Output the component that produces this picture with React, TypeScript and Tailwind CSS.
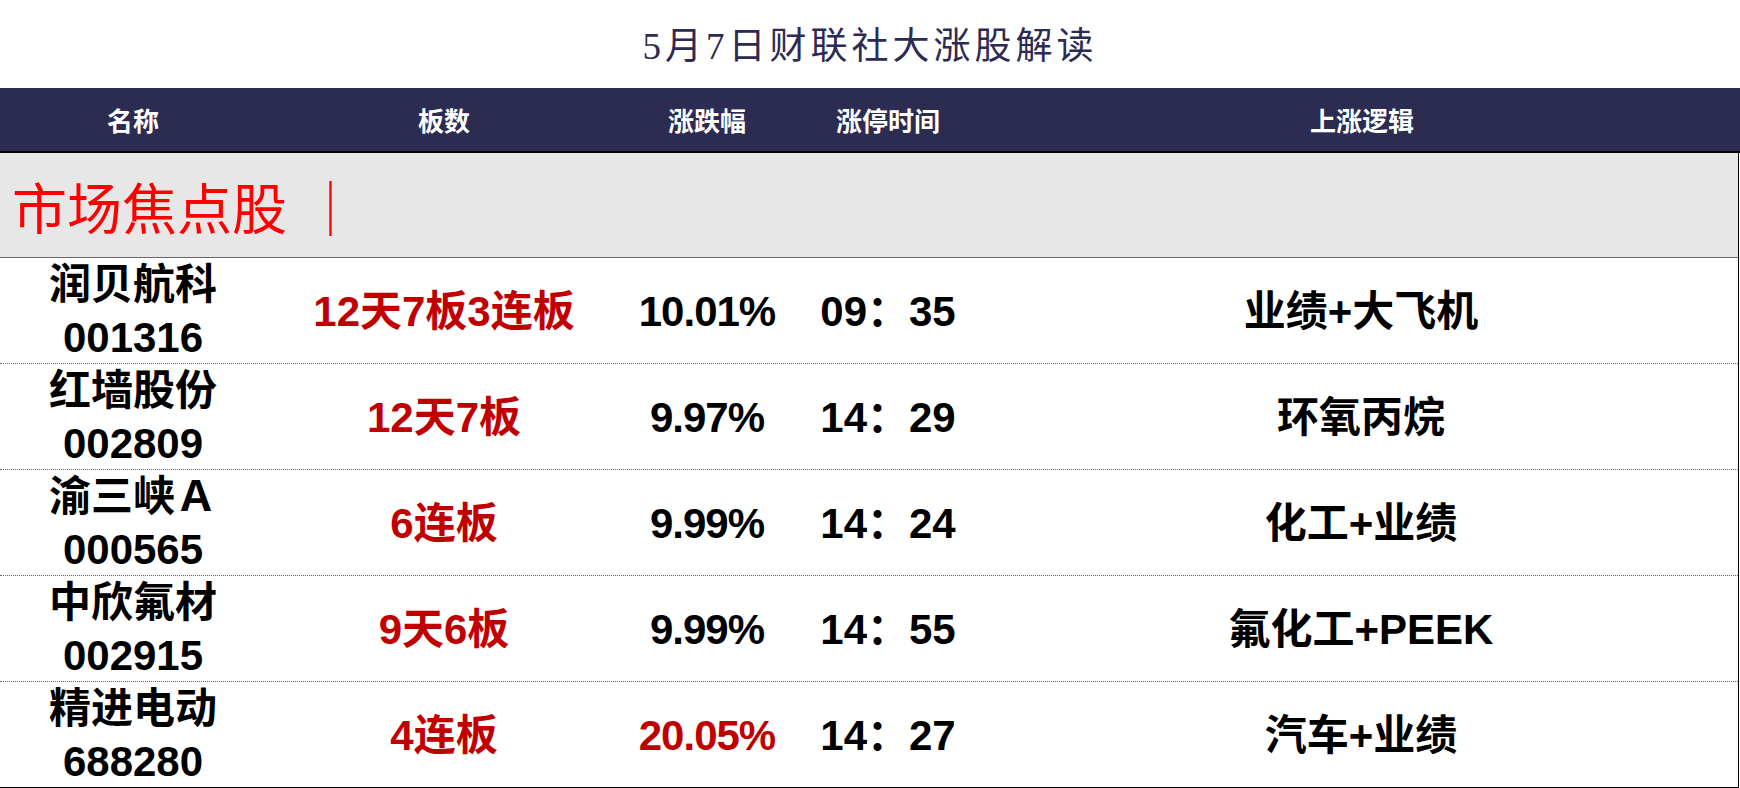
import React from 'react';

type Row = {
    name: string;
    code: string;
    board: string;
    pct: string;
    pctRed?: boolean;
    time: string;
    logic: string;
};

const rows: Row[] = [
    { name: '润贝航科', code: '001316', board: '12天7板3连板', pct: '10.01%', time: '09：35', logic: '业绩+大飞机' },
    { name: '红墙股份', code: '002809', board: '12天7板', pct: '9.97%', time: '14：29', logic: '环氧丙烷' },
    { name: '渝三峡Ａ', code: '000565', board: '6连板', pct: '9.99%', time: '14：24', logic: '化工+业绩' },
    { name: '中欣氟材', code: '002915', board: '9天6板', pct: '9.99%', time: '14：55', logic: '氟化工+PEEK' },
    { name: '精进电动', code: '688280', board: '4连板', pct: '20.05%', pctRed: true, time: '14：27', logic: '汽车+业绩' },
];

const cols = 'grid grid-cols-[266px_356px_170px_192px_1fr]';

const App = () => {
    return (
        <div className="w-[1740px] h-[788px] bg-white overflow-hidden font-['Liberation_Sans','Noto_Sans_CJK_SC',sans-serif]">
            {/* Title */}
            <div className="h-[88px] flex justify-center items-center pt-[6px]">
                <h1 className="text-[37px] tracking-[4px] font-normal text-[#2d2b52] font-['Liberation_Serif','Noto_Sans_CJK_SC',serif]">
                    5月7日财联社大涨股解读
                </h1>
            </div>

            {/* Header bar */}
            <div className={`${cols} h-[65px] bg-[#2c2b52] border-b-2 border-black text-white font-bold text-[26px] font-['Noto_Sans_CJK_SC',sans-serif]`}>
                <div className="flex items-center justify-center">名称</div>
                <div className="flex items-center justify-center">板数</div>
                <div className="flex items-center justify-center">涨跌幅</div>
                <div className="flex items-center justify-center">涨停时间</div>
                <div className="flex items-center justify-center">上涨逻辑</div>
            </div>

            {/* Section label */}
            <div className="h-[105px] w-[1739px] bg-[#e7e7e7] border-r border-b border-r-black border-b-[#666] border-b-dotted flex items-center pl-[12px]">
                <span className="text-[55px] text-[#ff0000] leading-none font-['Noto_Sans_CJK_SC',serif]">
                    市场焦点股
                </span>
                <span className="ml-[16px] text-[55px] text-[#ff0000] leading-none font-['Noto_Sans_CJK_SC',serif]">
                    ｜
                </span>
            </div>

            {/* Rows */}
            <div className="w-[1739px] border-r border-black">
                {rows.map((r, i) => (
                    <div
                        key={r.code}
                        className={`${cols} h-[106px] border-b ${
                            i === rows.length - 1 ? 'border-black border-solid' : 'border-[#666] border-dotted'
                        } font-bold text-[42px] leading-[53px]`}
                    >
                        <div className="flex flex-col items-center justify-center text-black">
                            <span>{r.name}</span>
                            <span>{r.code}</span>
                        </div>
                        <div className="flex items-center justify-center text-[#c00000] whitespace-nowrap">
                            {r.board}
                        </div>
                        <div className={`flex items-center justify-center tracking-[-1px] ${r.pctRed ? 'text-[#c00000]' : 'text-black'}`}>
                            {r.pct}
                        </div>
                        <div className="flex items-center justify-center text-black whitespace-nowrap">
                            {r.time}
                        </div>
                        <div className="flex items-center justify-center text-black">
                            {r.logic}
                        </div>
                    </div>
                ))}
            </div>
        </div>
    );
};

export default App;
